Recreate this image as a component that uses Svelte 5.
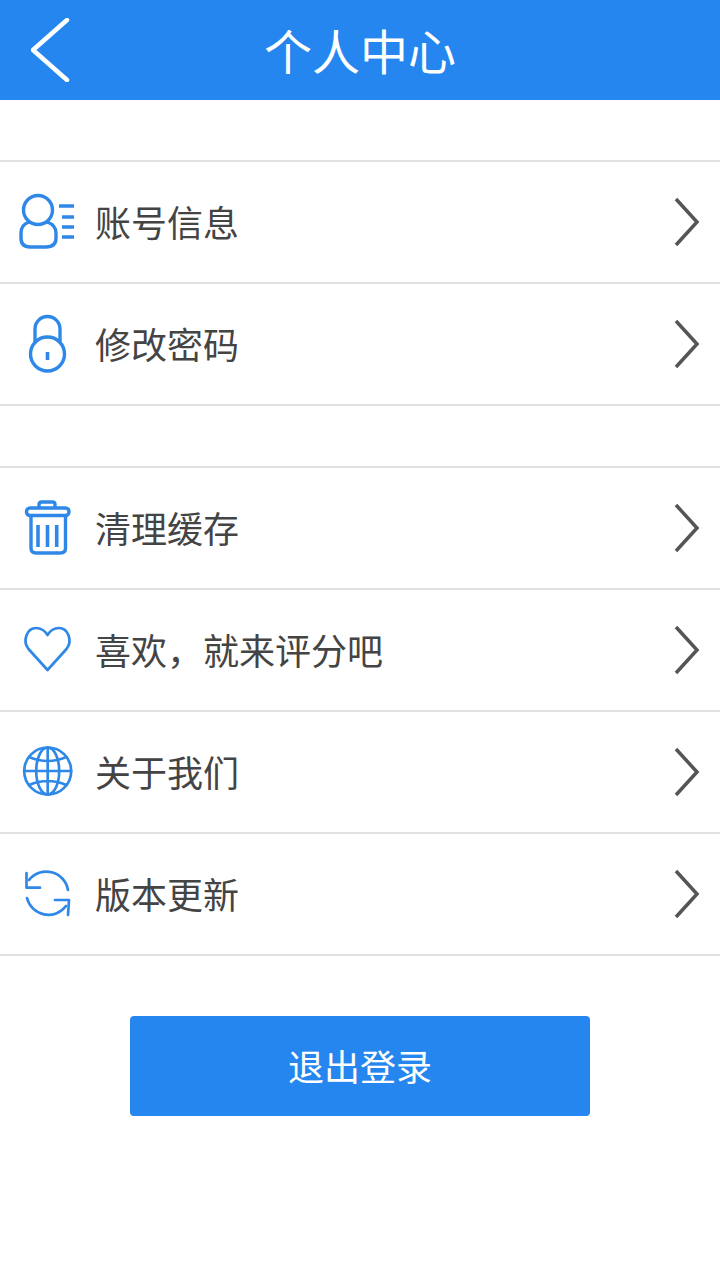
<script>
    const groupOne = [
        { key: "user", label: "账号信息" },
        { key: "lock", label: "修改密码" }
    ]
    const groupTwo = [
        { key: "trash", label: "清理缓存" },
        { key: "heart", label: "喜欢，就来评分吧" },
        { key: "globe", label: "关于我们" },
        { key: "sync", label: "版本更新" }
    ]
</script>

{#snippet row(item)}
    <div class="row">
        <svg class="icon {item.key}" viewBox="0 0 60 60" width="60" height="60">
            {#if item.key === "user"}
                <circle cx="21" cy="18" r="14.5" />
                <path d="M12 30 C6 32 4 36 4 41 V46 Q4 55 13 55 H29 Q39 55 39 46 V41 C39 36 36 32 30 30" />
                <path class="thick" d="M42 14 H57 M45 25 H57 M45 35 H57 M45 45 H57" />
            {:else if item.key === "lock"}
                <circle cx="30.5" cy="40" r="17" />
                <path d="M18 28 V15 A12.5 12.5 0 0 1 43 15 V28" />
                <path class="thick" d="M30.5 38 V46" />
            {:else if item.key === "trash"}
                <rect x="9.5" y="10" width="42.5" height="7.5" rx="3.5" />
                <path d="M14 18 V50 Q14 55 19 55 H43.5 Q48.5 55 48.5 50 V18" />
                <path d="M22 9.5 V6.5 Q22 4 24.5 4 H35.5 Q38 4 38 6.5 V9.5" />
                <path class="thick" d="M21 27 V49 M30.5 27 V49 M39.7 27 V49" />
            {:else if item.key === "heart"}
                <path d="M30.5 50 L11.5 29 C5 21 10 8 19 8 C24 8 28 11 30.5 15 C33 11 37 8 42 8 C51 8 56 21 49.5 29 Z" />
            {:else if item.key === "globe"}
                <circle cx="30.7" cy="29" r="23.5" />
                <ellipse cx="30.7" cy="29" rx="11.5" ry="23.5" />
                <path d="M30.7 5.5 V52.5 M7.2 29 H54.2 M12 15 Q30.7 23 49.4 15 M12 43 Q30.7 35 49.4 43" />
            {:else}
                <path d="M12 16 A22 22 0 0 1 51 26" />
                <path d="M9.5 9 V23.7 H23" />
                <path d="M10 34 A22 22 0 0 0 49 42" />
                <path d="M38 36 H52 L51 51" />
            {/if}
        </svg>
        <span class="label">{item.label}</span>
        <svg class="chevron" viewBox="0 0 26 50" width="26" height="50">
            <path d="M2 2 L23 25 L2 48" />
        </svg>
    </div>
{/snippet}

<div class="page">
    <header class="topbar">
        <svg class="back" viewBox="0 0 40 64" width="40" height="64">
            <path d="M36 2 L2 32 L36 62" />
        </svg>
        <h1>个人中心</h1>
        <span></span>
    </header>

    <section class="group">
        {#each groupOne as item}
            {@render row(item)}
        {/each}
    </section>

    <section class="group">
        {#each groupTwo as item}
            {@render row(item)}
        {/each}
    </section>

    <div class="logout-wrap">
        <button class="logout">退出登录</button>
    </div>
</div>

<style>
    :global(body) {
        margin: 0;
        background: #fff;
    }
    .page {
        width: 720px;
        height: 1280px;
        background: #fff;
        font-family: "Noto Sans CJK SC", "Noto Sans", sans-serif;
        overflow: hidden;
    }
    .topbar {
        height: 100px;
        background: #2486ee;
        display: grid;
        grid-template-columns: 1fr auto 1fr;
        align-items: center;
        padding-left: 31px;
        padding-right: 31px;
    }
    .topbar h1 {
        margin: 0 0 3px;
        color: #fff;
        font-size: 48px;
        font-weight: 400;
        line-height: 1;
    }
    .back {
        fill: none;
        stroke: #fff;
        stroke-width: 4.5;
        stroke-linecap: round;
        stroke-linejoin: round;
    }
    .group {
        margin-top: 60px;
        border-top: 2px solid #e0e0e0;
    }
    .row {
        height: 120px;
        border-bottom: 2px solid #e0e0e0;
        display: flex;
        align-items: center;
        padding-left: 17px;
        padding-right: 20px;
    }
    .icon {
        flex: none;
        fill: none;
        stroke: #2f88e8;
        stroke-width: 3.4;
        stroke-linecap: round;
        stroke-linejoin: round;
    }
    .icon.heart,
    .icon.globe,
    .icon.sync {
        stroke-width: 2.7;
    }
    .icon .thick {
        stroke-width: 3.6;
        stroke-linecap: butt;
    }
    .label {
        margin-left: 18px;
        margin-bottom: 2px;
        flex: 1;
        font-size: 36px;
        color: #444;
        line-height: 1;
    }
    .chevron {
        flex: none;
        fill: none;
        stroke: #555;
        stroke-width: 3.5;
        stroke-linejoin: miter;
    }
    .logout-wrap {
        margin-top: 60px;
        display: flex;
        justify-content: center;
    }
    .logout {
        width: 460px;
        height: 100px;
        border: none;
        border-radius: 4px;
        background: #2486ee;
        color: #fff;
        font-family: inherit;
        font-size: 36px;
        padding: 0 0 2px;
    }
</style>
